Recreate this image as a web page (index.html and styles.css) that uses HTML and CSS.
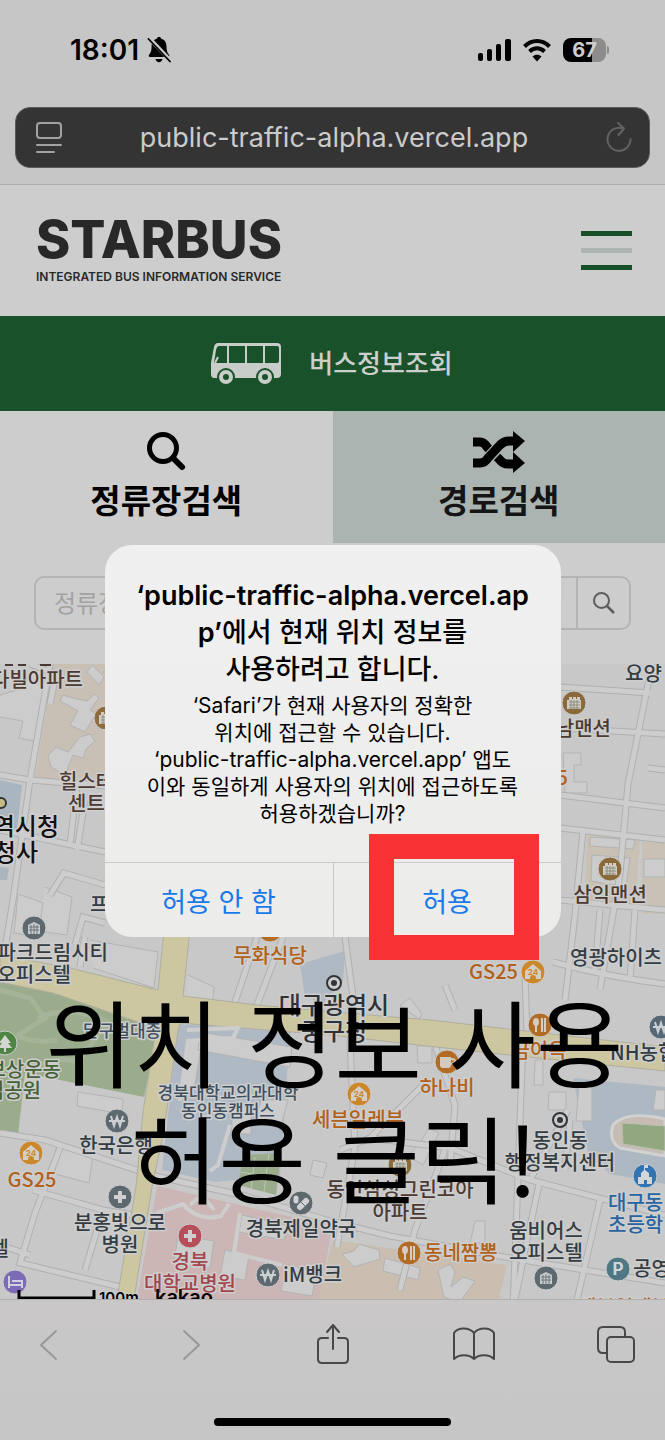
FILE: index.html
```html
<!DOCTYPE html>
<html lang="ko">
<head>
<meta charset="utf-8">
<meta name="viewport" content="width=device-width, initial-scale=1">
<title>STARBUS</title>
<link rel="stylesheet" href="styles.css">
</head>
<body>
<div class="phone">
  <header class="browser-top">
    <div class="status">
      <div class="status-side">
        <span class="clock">18:01</span>
        <svg class="bell" viewBox="0 0 24 30" width="24" height="30" aria-hidden="true">
          <path d="M12 2c1.300 0 2 .7 2.200 1.700 3.600.9 5.300 3.900 5.300 7.500 0 5.300 1.200 6.800 2.600 8.600.7 1 .2 2.200-1 2.200H3c-1.200 0-1.700-1.200-1-2.200 1.400-1.800 2.600-3.300 2.600-8.600 0-3.600 1.700-6.600 5.200-7.500C10 2.700 10.700 2 12 2z"/>
          <path d="M8.500 24h7c-.3 2-1.700 3.200-3.500 3.200S8.800 26 8.500 24z"/>
          <path d="M2.500 3.500l21 22" stroke="#c6c6c6" stroke-width="4"/>
          <path d="M1.500 4l21.500 22.500" stroke="#000" stroke-width="1.800" stroke-linecap="round"/>
        </svg>
      </div>
      <div class="status-side right">
        <svg viewBox="0 0 33 22" width="33" height="22" aria-hidden="true">
          <rect x="0" y="14" width="5" height="8" rx="2"/><rect x="9" y="10" width="5" height="12" rx="2"/><rect x="18" y="5" width="5" height="17" rx="2"/><rect x="27" y="0" width="6" height="22" rx="2"/>
        </svg>
        <svg viewBox="0 0 28 24" width="28" height="24" fill="none" stroke="#000" stroke-width="4" aria-hidden="true">
          <path d="M1.500 8.500C8.500 1.200 19.500 1.200 26.500 8.500"/><path d="M6.500 13.500c4.500-4.200 10.500-4.200 15 0"/><path d="M14 23.500l-4.500-5c2.500-2.200 6.500-2.200 9 0z" fill="#000" stroke="none"/>
        </svg>
        <span class="battery"><span class="battery-level">67</span><i></i></span>
      </div>
    </div>
    <div class="address">
      <button class="plain" aria-label="페이지 메뉴">
        <svg viewBox="0 0 28 32" width="28" height="32" fill="none" stroke="#a2a2a2" stroke-width="2" stroke-linecap="round"><rect x="2" y="1" width="24" height="15" rx="3"/><path d="M2 23h24M2 30h17"/></svg>
      </button>
      <span class="url">public-traffic-alpha.vercel.app</span>
      <button class="plain" aria-label="새로고침">
        <svg viewBox="0 0 28 32" width="28" height="32" fill="none" stroke="#626262" stroke-width="2" stroke-linecap="round" stroke-linejoin="round"><path d="M18 6.500A11.500 11.500 0 1 0 25.500 17M13 1l6 5.500-5.500 6.500"/></svg>
      </button>
    </div>
  </header>

  <div class="site-head">
    <a class="brand" href="#"><strong>STARBUS</strong><span>INTEGRATED BUS INFORMATION SERVICE</span></a>
    <button class="menu" aria-label="메뉴"><i></i><i></i><i></i></button>
  </div>

  <div class="banner">
    <svg viewBox="0 0 72 42" width="72" height="42" aria-hidden="true">
      <path d="M8 0h59q4 0 4 4v27q0 4-4 4H4q-3 0-3-4V20L4 4q1-4 4-4z" fill="#c9cdc9"/>
      <path d="M9 3h8v17H4L6 7q1-4 3-4zM19 3h16v17H19zM37 3h16v17H37zM55 3h12q2 0 2 2v13q0 2-2 2H55z" fill="#19522a"/>
      <path d="M8 14l-3 6" stroke="#c9cdc9" stroke-width="2"/>
      <g fill="#c9cdc9" stroke="#19522a" stroke-width="2"><circle cx="16" cy="34" r="8"/><circle cx="55" cy="34" r="8"/></g>
      <g fill="#19522a"><circle cx="16" cy="34" r="3"/><circle cx="55" cy="34" r="3"/></g>
    </svg>
    <span>버스정보조회</span>
  </div>

  <nav class="tabs">
    <button class="tab active">
      <svg viewBox="0 0 42 42" width="42" height="42" fill="none" stroke="#000" aria-hidden="true"><circle cx="18" cy="17" r="13.500" stroke-width="5"/><path d="M29 28l8 8" stroke-width="6" stroke-linecap="round"/></svg>
      <span>정류장검색</span>
    </button>
    <button class="tab">
      <svg viewBox="0 0 52 42" width="52" height="42" aria-hidden="true">
        <path d="M0 11h7q4 0 7 5l2 2M24 26l3 3q3 4 8 4h6" fill="none" stroke="#000" stroke-width="9"/>
        <path d="M0 32h7q5 0 8-5L27 14q4-4 9-4h5" fill="none" stroke="#abb4b1" stroke-width="11"/>
        <path d="M0 32h7q5 0 8-5L27 14q4-4 9-4h5" fill="none" stroke="#000" stroke-width="9"/>
        <path d="M40 0l12 10-12 11zM40 21l12 11-12 10z"/>
      </svg>
      <span>경로검색</span>
    </button>
  </nav>

  <form class="search">
    <div class="search-box">
      <input type="text" placeholder="정류장" aria-label="정류장">
      <button type="button" aria-label="검색"><svg viewBox="0 0 24 24" width="24" height="24" fill="none" stroke="#5d5d5d" stroke-width="2"><circle cx="9.500" cy="9.500" r="7.500"/><path d="M15 15l7 7" stroke-width="2.500"/></svg></button>
    </div>
  </form>

  <main class="map">
    <svg viewBox="0 664 665 635" preserveAspectRatio="xMidYMin slice" role="img" aria-label="지도">
      <defs>
        <g id="home"><path d="M-8-1L0-8 8-1V7H3V6a3 3 0 0 0-6 0v1h-5z" fill="#d3cfc8"/></g>
        <g id="bldg"><path d="M-7-3h2v-3h3v2h1v-2h3v2h1v-2h3v3h1V6H-7z" fill="#d0ccc4"/><path d="M-5-1H6M-5 2H6M-5 5H6M-3-3V6M0-3V6M3-3V6" stroke="#8f8f80" stroke-width="1"/></g>
        <g id="office"><path d="M-6-3L0-6 6-3V6H-6z" fill="#c9cccd"/><path d="M-5-1H5M-5 2H5M-3-3V6M0-4V6M3-3V6" stroke="#6a747a" stroke-width="1"/></g>
        <g id="food" fill="#d5cdc2"><ellipse cx="-3" cy="-3" rx="3" ry="4"/><path d="M-4 0h2v7h-2zM2-7h2V7H2zM5-7h2V7H5z"/></g>
        <g id="plus"><path d="M-6 0H6M0-6V6" stroke="#d0cfcf" stroke-width="4"/></g>
        <g id="won"><path d="M-6-5L-3 5 0-4 3 5 6-5M-8 0H8" fill="none" stroke="#cbd0d3" stroke-width="2"/></g>
        <g id="spot"><circle r="7" fill="#cbcbcb" stroke="#303438" stroke-width="2"/><circle r="3" fill="#303438"/></g>
        <g id="roads" fill="none">
          <path d="M0 775l30 5 75 6M50 664L30 780 13 900 0 980M30 664l26 10-6 30M77 785l-7 60M0 830l105 22M85 800l-8 50M50 895l14-22 41 12M75 945l8-28 22 6M85 937l-5 30"/>
          <path d="M560 687l90 6M560 728l105 6M652 664l-24 120-8 90-20 115M648 768l17 2M560 795l105 13M560 828l105 12M583 830l-8 85-10 85M560 900l105 10M600 910l-5 60M635 910l-5 70M553 962q55 15 112 22M525 975l2 60-5 30-3 85-6 160"/>
          <path d="M257 937l-22 65M283 937l-26 68M345 937l10 75-5 30 5 105-18 100M435 1045l20 60-5 60M455 1010l-10-25M0 1133l45 7 110 36 90 20 85 25 60 15 120 22 155 25"/>
          <path d="M60 1148l-25 65-15 50 100 24M33 1190l70 20-18 60M103 1210l60 10M0 1245l30 10M340 1150l30-12 60-60M370 1138l80 10 80 32 135 35M445 1150l-30 80-15 60M530 1180l38-70M600 1200l-23 100M565 1170l5-50M540 1180l-15 70-10 50"/>
        </g>
      </defs>
      <rect y="664" width="665" height="635" fill="#c8c8c8"/>
      <path d="M53 664h57v125l-75-10z" fill="#c8bfb5"/>
      <path d="M587 835l53 5-5 68-50-8zM642 842h23v72h-23z" fill="#c9c1b4"/>
      <path d="M0 980l53 13 97 23 8 12-14 69-94-19-25-5-7 62H0z" fill="#9aac8b"/>
      <path d="M0 990l30 8 15 20-28 18q20 8 40 4M28 1074q20-20 50-12l30-40q-38-18-70-4" fill="none" stroke="#a5b399" stroke-width="5"/>
      <path d="M178 1024l113 7-3 30-8 115-65 6-53-12z" fill="#aeb9c4"/>
      <path d="M243 1155l38-2-5 42-38-10z" fill="#9aac8b"/><path d="M240 1172l38 6M255 1157l-4 32M269 1154l-5 38" stroke="#bbc8b1"/>
      <path d="M300 964l45-13-2 30-20 22-18-6z" fill="#aeb9c4"/>
      <path d="M0 780l22 5-5 45H0zM0 867l9 1-2 12H0z" fill="#a9b5bf"/>
      <path d="M573 1078l92 9v97l-55-10-22-22z" fill="#aeb8c2"/>
      <path d="M157 1186l95 22 80 18-12 73H137z" fill="#cbb5b5"/>
      <path d="M333 1240l174 25-8 34H318z" fill="#c9beb0"/>
      <g class="block">
        <path d="M87 701l8-7 4 4-9 12 6 4-11 18-15-7 8-14-18-10 3-6 10 3zM48 756l8-9 12 5 12-15 10-3 5 7-9 8-3 9-10-3-8 20-14-8zM87 672l5-7 12 12-5 8z"/>
        <path d="M110 664l-8 10M0 695l24-7 8-18h15l-8 72-20-4 4-17L0 717M18 894l25 9-5 34-24-4zM45 887l27 10-5 38-29-4M90 940l68 12-4 36-61-20M188 975l26 12-2 20-25-5"/>
        <path d="M563 753h18v12h-7v17h13v11h-22zM590 837l45 3-2 9-43-3zM592 855l38 3-4 29-35-6zM644 859h21v18h-21z"/>
        <path d="M78 1092l45 7-1 15-45-8zM56 1148l37 7-4 28-34-9zM200 1032l92 15-2 20-92-17zM190 1040l12 1-8 50-13-3zM232 1107h19v27h-19zM262 1100h26l-7 26-27-6zM313 1160l14 3-4 15-13-3z"/>
        <path d="M400 1005l10-7 12 16-3 5zM417 1046h15v17h-14zM535 1060h8v25h-9zM549 1092h17v18h-18zM579 1085h13v36h-16zM656 1090h9v20h-12zM420 1143l9-15 10 5-16 32-15-9z"/>
        <path d="M178 1235l36 6-4 27-36-5zM242 1215l44 10-2 15-45-8zM225 1250l24 5-4 25-25-4zM287 1265l30 6-5 25-31-5zM342 1254l12-3 5-7 20 6 1 9-26 8zM385 1258l35 10-2 12-35-9zM438 1270l12-6 5 8-4 15 12-10 12 4-16 22-15-6zM475 1221h10v22h-15z"/>
      </g>
      <use href="#roads" class="road-edge"/><use href="#roads" class="road-fill"/>
      <path d="M164 930h26l-7 66 74 9 76 7 97 8 235 27v24l-175-18-160-18-150-12-2 7-14 100-12 57-18 112h-17l19-112 7-75 11-70 2-14L53 993 0 982v-27l70 13 88 22z" fill="#cdc7a1" stroke="#afae9f"/>
      <path d="M157 1213l26-9q15 18 38 12l8-12M190 1205l12-10 12 15M240 1213l-6 40 48 12" class="pale-road"/>
      <path d="M187 1030l51-2-5 10-45 3-8 60M230 1125l-12 40-8 6" class="pale-road"/>
      <path d="M613 1125q13-15 52-6v37l-45-8q-12-7-7-23z" fill="#c6bcb4" stroke="#d2d2d2" stroke-width="3"/><path d="M622 1123l43 3v25l-42-7z" fill="#91a77f" stroke="#b8c1ae"/>
      <path d="M5 665h8M18 665h8M40 665h11" stroke="#4a3a33" stroke-width="2"/>

      <g><circle cx="1" cy="803" r="5" fill="#c5bb82" stroke="#303438" stroke-width="2"/>
        <circle cx="34" cy="928" r="12" fill="#5e696f" class="halo"/><use href="#office" x="34" y="928"/>
        <circle cx="106" cy="718" r="12" fill="#8e6b3c" class="halo"/><use href="#bldg" x="106" y="718"/>
        <circle cx="574" cy="703" r="12" fill="#8a6a3b" class="halo"/><use href="#bldg" x="574" y="703"/>
        <circle cx="610" cy="869" r="12" fill="#8a6a3b" class="halo"/><use href="#bldg" x="610" y="869"/>
        <circle cx="400" cy="1165" r="12" fill="#8a6a3b" class="halo"/><use href="#bldg" x="400" y="1165"/>
        <circle cx="546" cy="1278" r="12" fill="#5e696f" class="halo"/><use href="#office" x="546" y="1278"/>
        <circle cx="533" cy="972" r="12" fill="#cb882b" class="halo"/><use href="#home" x="533" y="972"/>
        <circle cx="359" cy="1094" r="12" fill="#cb882b" class="halo"/><use href="#home" x="359" y="1094"/>
        <circle cx="31" cy="1153" r="12" fill="#cb882b" class="halo"/><use href="#home" x="31" y="1153"/>
        <circle cx="270" cy="930" r="12" fill="#b26c26" class="halo"/>
        <circle cx="540" cy="1025" r="12" fill="#b26c26" class="halo"/><use href="#food" x="539" y="1025"/>
        <circle cx="409" cy="1253" r="12" fill="#b26c26" class="halo"/><use href="#food" x="408" y="1253"/>
        <circle cx="447" cy="1062" r="12" fill="#b26c26" class="halo"/><path d="M440 1057h11v8q0 3-3 3h-5q-3 0-3-3z" fill="#d3cbc0"/><path d="M451 1059q4 0 4 2t-4 3" fill="none" stroke="#d3cbc0" stroke-width="2"/>
        <circle cx="661" cy="1027" r="12" fill="#566776" class="halo"/><use href="#won" x="661" y="1027"/>
        <circle cx="117" cy="1121" r="12" fill="#5e696f" class="halo"/><use href="#won" x="117" y="1121"/>
        <circle cx="268" cy="1275" r="12" fill="#5e696f" class="halo"/><use href="#won" x="268" y="1275"/>
        <circle cx="5" cy="1043" r="12" fill="#4e8545" class="halo"/><path d="M5 1035l6 8H8l4 5H6v4H4v-4h-6l4-5h-3z" fill="#d3d7d0"/>
        <circle cx="120" cy="1197" r="12" fill="#5e696f" class="halo"/><use href="#plus" x="120" y="1197"/>
        <circle cx="190" cy="1236" r="12" fill="#b64f59" class="halo"/><use href="#plus" x="190" y="1236"/>
        <circle cx="301" cy="1203" r="12" fill="#5e696f" class="halo"/><g fill="none" stroke="#d0d2d3" stroke-linecap="round"><path d="M296 1198v3" stroke-width="5"/><path d="M300 1207l6-6" stroke-width="6"/></g><path d="M300 1201l6 6" stroke="#5e696f"/>
        <circle cx="15" cy="1282" r="12" fill="#7b6ab5" class="halo"/><path d="M9 1276v12M9 1285h13v3M12 1281h10v3" fill="none" stroke="#d2cfe0" stroke-width="2"/>
        <circle cx="645" cy="1176" r="12" fill="#3274b2" class="halo"/><path d="M638 1184v-7h3v-4l3-3v-5h4v3h-3v2l4 3v4h3v7h-5v-4h-3v4z" fill="#d3d6d9"/>
        <circle cx="618" cy="1269" r="12" fill="#4f7884" class="halo"/><text x="618" y="1275" class="pin middle">P</text>
        <use href="#spot" x="334" y="983"/><use href="#spot" x="560" y="1120"/>
        <g class="tiny middle"><text x="533" y="975">24</text><text x="359" y="1097">24</text><text x="31" y="1156">24</text></g>
      </g>
      <g class="label">
        <g class="brown"><text x="83" y="687" class="end">다빌아파트</text><text x="59" y="789">힐스테</text><text x="68" y="811">센트</text><text x="611" y="736" class="end">남맨션</text><text x="610" y="902" class="middle">삼익맨션</text><text x="400" y="1197" class="middle">동인삼성그린코아</text><text x="400" y="1220" class="middle">아파트</text></g>
        <g class="big"><text x="59" y="835" class="end">역시청</text><text x="38" y="861" class="end">청사</text></g>
        <g class="big soft"><text x="334" y="1014" class="middle">대구광역시</text><text x="334" y="1040" class="middle">중구청</text></g>
        <text x="90" y="912">프</text><text x="108" y="960" class="end">파크드림시티</text><text x="71" y="982" class="end">오피스텔</text>
        <text x="570" y="965">영광하이츠</text><text x="625" y="681">요양</text>
        <g class="orange"><text x="270" y="963" class="middle">무화식당</text><text x="518" y="979" class="end">GS25</text><text x="568" y="785" class="end">5</text><text x="447" y="1095" class="middle">하나비</text><text x="539" y="1058" class="middle">금이옥</text><text x="358" y="1127" class="middle">세븐일레븐</text><text x="32" y="1187" class="middle">GS25</text><text x="424" y="1260">동네짬뽕</text><text x="578" y="1315">세븐일레븐</text></g>
        <g class="small"><text x="83" y="1037">달구벌대종</text><text x="228" y="1099" class="middle">경북대학교의과대학</text><text x="228" y="1117" class="middle">동인동캠퍼스</text></g>
        <g class="green"><text x="61" y="1077" class="end">보상운동</text><text x="41" y="1098" class="end">념공원</text></g>
        <text x="610" y="1060">NH농협</text><text x="116" y="1153" class="middle">한국은행</text><text x="120" y="1230" class="middle">분홍빛으로</text><text x="120" y="1252" class="middle">병원</text><text x="9" y="1256" class="end">텔</text>
        <g class="red"><text x="190" y="1269" class="middle">경북</text><text x="190" y="1291" class="middle">대학교병원</text></g>
        <text x="301" y="1236" class="middle">경북제일약국</text><text x="283" y="1282">iM뱅크</text><text x="546" y="1238" class="middle">움비어스</text><text x="546" y="1260" class="middle">오피스텔</text><text x="560" y="1148" class="middle">동인동</text><text x="560" y="1170" class="middle">행정복지센터</text><text x="633" y="1276">공영</text>
        <g class="blue"><text x="608" y="1210">대구동</text><text x="608" y="1232">초등학</text></g>
      </g>
      <path d="M19 1290v8h75v-8" fill="none" stroke="#000" stroke-width="3"/>
      <text x="99" y="1303" class="scale">100m</text><text x="155" y="1304" class="kakao">kakao</text>
    </svg>
  </main>

  <footer class="toolbar">
    <div class="tools">
      <button class="plain" aria-label="뒤로"><svg viewBox="0 0 20 40" width="20" height="40" class="faint"><path d="M17 6L2 20l15 14"/></svg></button>
      <button class="plain" aria-label="앞으로"><svg viewBox="0 0 20 40" width="20" height="40" class="faint"><path d="M3 6l15 14L3 34"/></svg></button>
      <button class="plain" aria-label="공유"><svg viewBox="0 0 34 44" width="34" height="44"><path d="M12 15H6q-4 0-4 4v17q0 4 4 4h22q4 0 4-4V19q0-4-4-4h-6M17 26V3M11 9l6-7 6 7"/></svg></button>
      <button class="plain" aria-label="책갈피"><svg viewBox="0 0 42 44" width="42" height="44"><path d="M21 10C16 4 5 4 1 10v26c5-5 15-5 20 0 5-5 15-5 20 0V10C37 4 26 4 21 10zM21 10v26"/></svg></button>
      <button class="plain" aria-label="탭"><svg viewBox="0 0 40 44" width="40" height="44"><rect x="11" y="14" width="27" height="25" rx="4"/><path d="M11 30H7q-5 0-5-5V9q0-5 5-5h17q5 0 5 5v5"/></svg></button>
    </div>
    <div class="home-bar"></div>
  </footer>

  <section class="dialog" role="alertdialog" aria-labelledby="dialog-title">
    <div class="dialog-text">
      <h1 id="dialog-title">‘public-traffic-alpha.vercel.ap<br>p’<span>에서 현재 위치 정보를</span><br><span>사용하려고 합니다.</span></h1>
      <p>‘Safari’가 현재 사용자의 정확한<br>위치에 접근할 수 있습니다.<br>‘public-traffic-alpha.vercel.app’ 앱도<br>이와 동일하게 사용자의 위치에 접근하도록<br>허용하겠습니까?</p>
    </div>
    <div class="dialog-actions"><button>허용 안 함</button><button>허용</button></div>
    <div class="marker"></div>
  </section>
  <p class="caption">위치 정보 사용<br>허용 클릭!</p>
</div>
</body>
</html>
```
FILE: styles.css
```css
* { box-sizing: border-box; }
body { margin: 0; background: #c6c6c6; font-family: Inter, "Noto Sans CJK KR", sans-serif; color: #000; }
button, input { font: inherit; color: inherit; }
button { padding: 0; border: 0; background: none; }
svg { display: block; }
.phone { position: relative; display: flex; flex-direction: column; min-height: 100vh; overflow: hidden; }

.browser-top { height: 185px; padding: 32px 15px 0; background: #c6c6c6; border-bottom: 1px solid #adadad; }
.status { display: flex; justify-content: space-between; align-items: center; height: 36px; padding: 0 41px 0 55px; }
.status-side { display: flex; align-items: center; gap: 8px; }
.status-side.right { gap: 12px; }
.clock { font-size: 28px; font-weight: 600; line-height: 36px; }
.battery { display: flex; align-items: center; gap: 1px; }
.battery-level { width: 43px; height: 24px; border-radius: 8px; background: linear-gradient(90deg, #000 67%, #8c8c8c 67%); color: #cecece; font-size: 20px; font-weight: 700; line-height: 24px; text-align: center; }
.battery i { width: 2px; height: 8px; border-radius: 0 2px 2px 0; background: #8c8c8c; }
.address { display: flex; align-items: center; justify-content: space-between; height: 61px; margin-top: 39px; padding: 0 16px 0 19px; border: 1px solid #5a5a5a; border-radius: 15px; background: #343434; color: #cbcbcb; }
.url { font-size: 27px; line-height: 36px; }

.site-head { display: flex; align-items: center; justify-content: space-between; height: 131px; padding: 0 33px 0 36px; background: #cdcdcd; }
.brand { display: flex; flex-direction: column; padding-bottom: 4px; color: #282828; text-decoration: none; }
.brand strong { font-size: 52px; font-weight: 800; line-height: 56px; }
.brand span { font-size: 12px; font-weight: 600; line-height: 18px; }
.menu { display: grid; gap: 12px; width: 51px; }
.menu i { height: 5px; background: #174f29; }
.menu i:nth-child(2) { background: #adb4b1; }

.banner { display: flex; align-items: center; justify-content: center; gap: 27px; height: 95px; padding-right: 2px; background: #19522a; color: #cccfcc; font-size: 26px; font-weight: 500; line-height: 36px; }

.tabs { display: grid; grid-template-columns: 1fr 1fr; height: 132px; }
.tab { display: flex; flex-direction: column; align-items: center; padding-top: 20px; background: #abb4b1; font-size: 33px; font-weight: 700; line-height: 48px; gap: 4px; border-bottom: 1px solid #a8adab; color: #151515; }
.tab.active { background: #cdcdcd; border-color: #cdcdcd; color: #000; }

.search { height: 121px; padding: 33px 34px; background: #cdcdcd; }
.search-box { display: flex; height: 54px; border: 2px solid #b4b4b4; border-radius: 10px; }
.search-box input { flex: 1; min-width: 0; padding: 0 18px; border: 0; background: none; font-size: 24px; }
.search-box input::placeholder { color: #a2a2a2; opacity: 1; }
.search-box button { display: grid; place-items: center; width: 53px; border-left: 2px solid #b4b4b4; }

.map { flex: 1; min-height: 635px; display: grid; overflow: hidden; }
.map svg { width: 100%; height: 100%; }
.road-edge { stroke: #aeb0b1; stroke-width: 7px; }
.road-fill { stroke: #cdcdce; stroke-width: 5px; }
.pale-road { fill: none; stroke: #cdcdce; stroke-width: 4px; }
.block { fill: #cccccc; stroke: #b3b3b3; }
.halo { stroke: #cdcdcd; stroke-width: 1px; }
.label { font: 500 20px "Noto Sans CJK KR", sans-serif; fill: #343c43; stroke: #cecece; stroke-width: 3px; stroke-linejoin: round; paint-order: stroke; }
.end { text-anchor: end; }
.middle { text-anchor: middle; }
.big { font-size: 24px; fill: #111111; }
.soft { fill: #303336; }
.small { font-size: 17px; fill: #40505e; }
.brown { fill: #4b3a32; }
.orange { fill: #b1611b; }
.green { fill: #456238; }
.red { fill: #a3474f; }
.blue { fill: #2864a0; }
.pin { font-size: 17px; font-weight: 700; fill: #d0d5d7; }
.tiny { font-size: 8px; font-weight: 700; fill: #cb882b; }
.scale { font-size: 15px; font-weight: 600; stroke: #cecece; stroke-width: 2px; paint-order: stroke; }
.kakao { font-size: 20px; font-weight: 600; }

.toolbar { display: flex; flex-direction: column; align-items: center; justify-content: space-between; height: 141px; padding: 22px 28px 14px; border-top: 1px solid #b0b0b0; background: linear-gradient(#c9c7c7, #c6c6c6); }
.tools { display: flex; align-items: center; justify-content: space-between; width: 100%; }
.tools button { display: grid; place-items: center; width: 42px; height: 46px; }
.tools svg { fill: none; stroke: #484848; stroke-width: 2px; stroke-linecap: round; stroke-linejoin: round; }
.tools .faint { stroke: #989898; }
.home-bar { width: 237px; height: 8px; border-radius: 4px; background: #000; }

.dialog { position: absolute; top: 545px; left: 50%; width: 456px; margin-left: -228px; border-radius: 27px; background: linear-gradient(#f0f0f0, #ececeb); text-align: center; }
.dialog-text { padding: 32px 16px 35px; }
.dialog h1 { margin: 0; font-size: 27px; font-weight: 600; line-height: 37px; white-space: nowrap; }
.dialog h1 span { font-weight: 500; }
.dialog p { margin: 4px 0 0; font-size: 21px; line-height: 27px; white-space: nowrap; }
.dialog-actions { display: grid; grid-template-columns: 1fr 1fr; border-top: 1px solid #cbc9c7; }
.dialog-actions button { height: 74px; color: #1879ea; font-size: 27px; }
.dialog-actions button + button { border-left: 1px solid #cbc9c7; }
.marker { position: absolute; left: 264px; bottom: -23px; width: 170px; height: 126px; border: 25px solid #f93333; }
.caption { position: absolute; top: 982px; left: 0; right: 0; margin: 0; padding-left: 4px; font-family: "Noto Sans CJK KR", sans-serif; font-size: 95px; line-height: 116px; text-align: center; white-space: nowrap; }
```
